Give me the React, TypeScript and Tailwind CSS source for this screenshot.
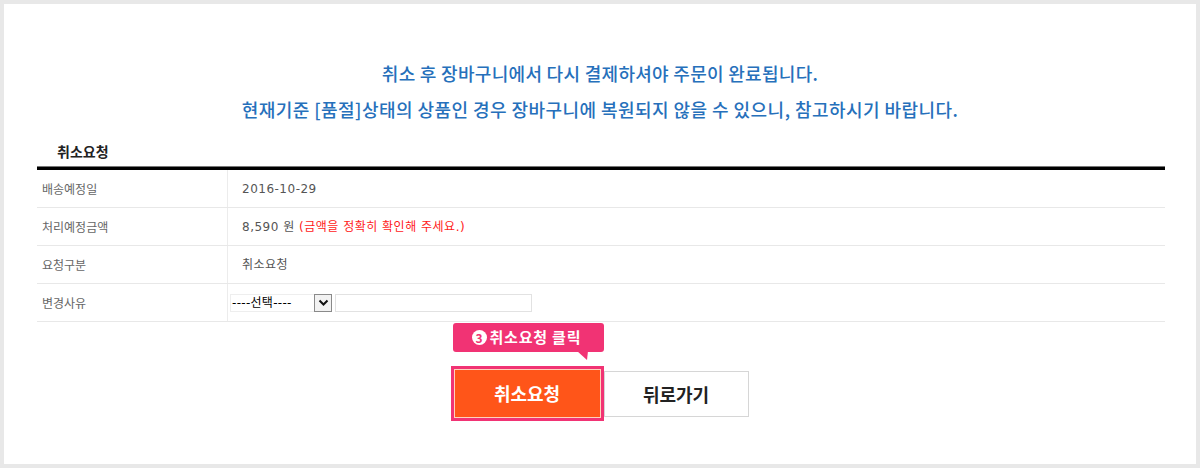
import React from "react";

const font = { fontFamily: '"Noto Sans CJK KR", "Noto Sans", sans-serif' };
const valFont = { fontFamily: '"DejaVu Sans", "Noto Sans CJK KR", sans-serif' };

function Row({ label, children }: { label: string; children: React.ReactNode }) {
  return (
    <div className="flex h-[38px] border-b border-[#e8e8e8]">
      <div className="w-[191px] flex items-center pl-[5px] text-[12px] text-[#666] border-r border-[#ececec]">{label}</div>
      <div className="flex-1 flex items-center text-[12px] text-[#555] tracking-[0.5px]" style={valFont}>{children}</div>
    </div>
  );
}

export default function App() {
  return (
    <div className="w-[1200px] h-[468px] bg-[#e8e8e8] p-[4px]" style={font}>
      <div className="h-full bg-white flex flex-col">
        <div className="pt-[57px] flex flex-col items-center text-[#2670bb] text-[18px] tracking-[0.3px] font-medium leading-[24px] gap-[12px]">
          <p>취소 후 장바구니에서 다시 결제하셔야 주문이 완료됩니다.</p>
          <p className="tracking-[0.45px]">현재기준 [품절]상태의 상품인 경우 장바구니에 복원되지 않을 수 있으니, 참고하시기 바랍니다.</p>
        </div>
        <div className="ml-[33px] mr-[31px] mt-[20px]">
          <div className="pl-[20px] text-[14px] font-bold text-[#222] leading-[20px] pb-[5px]">취소요청</div>
          <div className="h-[1px] bg-[#777]" />
          <div className="h-[3px] bg-black" />
          <Row label="배송예정일">
            <span className="pl-[14px]">2016-10-29</span>
          </Row>
          <Row label="처리예정금액">
            <span className="pl-[14px]">
              8,590 원 <span className="text-[#ff1a1a]">(금액을 정확히 확인해 주세요.)</span>
            </span>
          </Row>
          <Row label="요청구분">
            <span className="pl-[14px]">취소요청</span>
          </Row>
          <Row label="변경사유">
            <div className="pl-[2px] flex items-center gap-[3px] tracking-normal">
              <div className="w-[102px] h-[18px] flex items-center justify-between border border-[#eeeeee] bg-white">
                <span className="text-[12px] text-black leading-none pl-[1px] tracking-[0.3px]">----선택----</span>
                <span className="w-[18px] h-[18px] -mr-[1px] flex items-center justify-center border border-[#8a8a8a] bg-[#f2f2f2]">
                  <svg width="11" height="8" viewBox="0 0 11 8">
                    <path d="M1.5 1.5 L5.5 5.5 L9.5 1.5" fill="none" stroke="#111" strokeWidth="2" />
                  </svg>
                </span>
              </div>
              <div className="w-[197px] h-[18px] border border-[#e2e2e2] bg-white" />
            </div>
          </Row>
        </div>
        <div className="flex justify-center mt-[44px] pr-[1px]">
          <div className="relative flex items-start">
            <div className="absolute left-[2px] -top-[43px] w-[151px] h-[29px] bg-[#f13374] rounded-[3px] flex items-center pl-[19px] text-white text-[15px] font-bold">
              <span className="w-[15px] h-[15px] rounded-full bg-white text-[#f13374] text-[12px] font-bold flex items-center justify-center leading-none mr-[3px]">3</span>
              <span className="tracking-[0.8px]">취소요청 클릭</span>
              <svg className="absolute left-[124px] top-[28px]" width="12" height="9" viewBox="0 0 12 9">
                <path d="M0 0 L11 0 L10 9 Z" fill="#f13374" />
              </svg>
            </div>
            <div className="w-[153px] h-[55px] bg-[#f13374] p-[3px]">
              <div className="w-full h-full border border-[#ffd2bd] bg-[#ff5519] flex items-center justify-center text-white text-[18px] font-bold">
                취소요청
              </div>
            </div>
            <div className="w-[145px] h-[46px] mt-[5px] border border-[#d6d6d6] bg-white flex items-center justify-center text-[#222] text-[18px] font-bold">
              뒤로가기
            </div>
          </div>
        </div>
      </div>
    </div>
  );
}
